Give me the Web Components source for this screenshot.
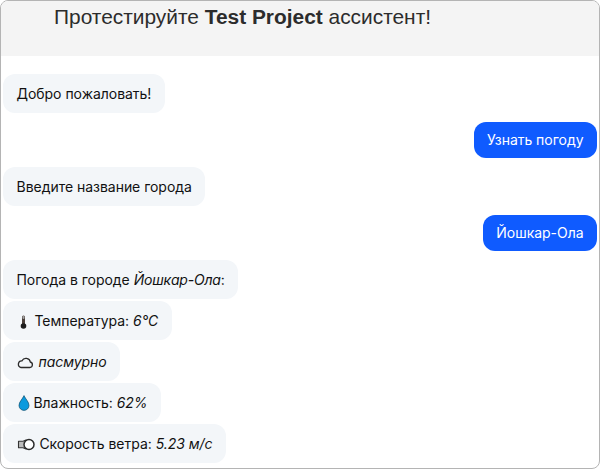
<!DOCTYPE html>
<html lang="ru">
<head>
<meta charset="utf-8">
<title>Test Project</title>
<style>
html, body { margin: 0; height: 100%; background: #fff; }
body { overflow: hidden; font-family: Inter, "Liberation Sans", sans-serif; }
</style>
</head>
<body>
<chat-window>
    <span slot="title">Протестируйте <b>Test Project</b> ассистент!</span>
    <chat-group>
        <chat-bubble>Добро пожаловать!</chat-bubble>
    </chat-group>
    <chat-group>
        <chat-bubble from="user">Узнать погоду</chat-bubble>
    </chat-group>
    <chat-group>
        <chat-bubble>Введите название города</chat-bubble>
    </chat-group>
    <chat-group>
        <chat-bubble from="user">Йошкар-Ола</chat-bubble>
    </chat-group>
    <chat-group>
        <chat-bubble>Погода в городе <i class="city" style="letter-spacing:-.2px">Йошкар-Ола</i>:</chat-bubble>
        <chat-bubble><weather-icon name="temp"></weather-icon> Температура: <i>6°C</i></chat-bubble>
        <chat-bubble><weather-icon name="cloud"></weather-icon> <i>пасмурно</i></chat-bubble>
        <chat-bubble><weather-icon name="drop"></weather-icon> Влажность: <i>62%</i></chat-bubble>
        <chat-bubble><weather-icon name="wind"></weather-icon> Скорость ветра: <i>5.23 м/с</i></chat-bubble>
    </chat-group>
</chat-window>

<script>
class ChatWindow extends HTMLElement{
    constructor(){
        super();
        this.attachShadow({mode: 'open'});
        this.shadowRoot.innerHTML = `
        <style>
        :host{
            display: flex;
            flex-direction: column;
            box-sizing: border-box;
            width: 600px;
            height: 469px;
            border: 1px solid #b4b4b4;
            border-radius: 8px;
            overflow: hidden;
        }
        header{
            box-sizing: border-box;
            height: 55px;
            flex: none;
            background: #f4f4f4;
            color: #2c2c2c;
            padding: 2px 0 0 53px;
            font: 20.9px/28px "Liberation Sans", Arial, sans-serif;
        }
        .messages{
            display: flex;
            flex-direction: column;
            gap: 9px;
            padding: 18px 2px 0 2px;
        }
        </style>
        <header><slot name="title"></slot></header>
        <div class="messages"><slot></slot></div>
        `;
    }
}

class ChatGroup extends HTMLElement{
    constructor(){
        super();
        this.attachShadow({mode: 'open'});
        this.shadowRoot.innerHTML = `
        <style>
        :host{
            display: flex;
            flex-direction: column;
            align-items: flex-start;
            gap: 2px;
        }
        </style>
        <slot></slot>
        `;
    }
    connectedCallback(){
        if(this.querySelector('chat-bubble[from="user"]')){
            this.style.alignItems = 'flex-end';
        }
    }
}

class ChatBubble extends HTMLElement{
    constructor(){
        super();
        this.attachShadow({mode: 'open'});
        this.shadowRoot.innerHTML = `
        <style>
        :host{
            display: block;
            box-sizing: border-box;
            height: 39px;
            padding: 10px 13.5px;
            background: #f3f6f9;
            color: #111;
            border-radius: 12px;
            font: 14px/19px Inter, "Liberation Sans", sans-serif;
            letter-spacing: -0.03px;
            white-space: nowrap;
        }
        :host([from="user"]){
            height: 36px;
            padding: 8px 13.5px;
            background: #0f5bff;
            color: #fff;
        }
        </style>
        <slot></slot>
        `;
    }
}

const ICONS = {
    temp: `<svg width="14" height="16" viewBox="0 0 14 16"><rect x="5" y="2.500" width="3" height="10" rx="1.500" fill="#4a3f3a"/><rect x="5.500" y="3" width="2" height="3" rx="1" fill="#a5a5a5"/><circle cx="6.500" cy="13" r="2.800" fill="#1d1d1d"/></svg>`,
    cloud: `<svg width="18" height="13" viewBox="0 0 18 13"><path d="M4 10.500h8.800a2.800 2.800 0 0 0 .5-5.500A4.400 4.400 0 0 0 5 3.800 3.400 3.400 0 0 0 4 10.500z" fill="none" stroke="#2b2b2b" stroke-width="1.300"/></svg>`,
    drop: `<svg width="13" height="16" viewBox="0 0 13 16"><path d="M7 .6C5.500 4 2 7 2 10.400a5 5 0 0 0 10 0C12 7 8.500 4 7 .6z" fill="#0a9ade" stroke="#14506e" stroke-width=".7"/></svg>`,
    wind: `<svg width="19" height="14" viewBox="0 0 19 14"><path d="M1.500 3.200h4.500L9 2v9L6 9.800H1.500z" fill="#bdbdbd" stroke="#333" stroke-width="1.100" stroke-linejoin="round"/><circle cx="12" cy="6.500" r="5" fill="#fff" stroke="#2b2b2b" stroke-width="1.500"/></svg>`
};

class WeatherIcon extends HTMLElement{
    constructor(){
        super();
        this.attachShadow({mode: 'open'});
    }
    connectedCallback(){
        this.shadowRoot.innerHTML = `
        <style>
        :host{ display: inline-flex; vertical-align: -3px; }
        svg{ display: block; }
        </style>
        ${ICONS[this.getAttribute('name')]}
        `;
    }
}

customElements.define('chat-window', ChatWindow);
customElements.define('chat-group', ChatGroup);
customElements.define('chat-bubble', ChatBubble);
customElements.define('weather-icon', WeatherIcon);
</script>
</body>
</html>
